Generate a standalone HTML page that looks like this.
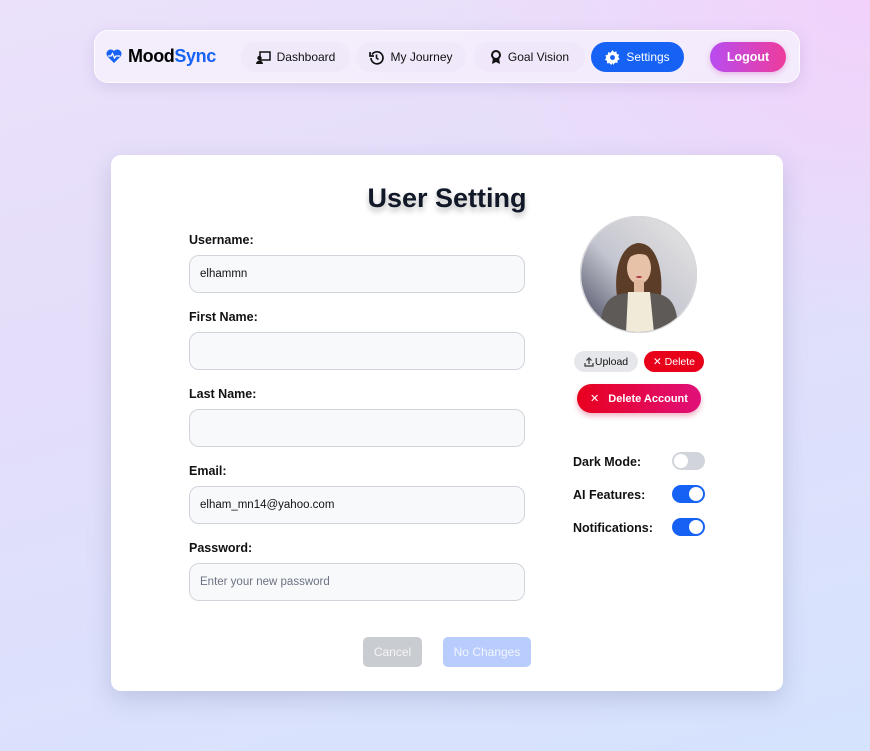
<!DOCTYPE html>
<html><head><meta charset="utf-8"><style>
*{box-sizing:border-box;margin:0;padding:0}
html,body{width:870px;height:751px;overflow:hidden}
body{font-family:"Liberation Sans",sans-serif;background:linear-gradient(165deg,#ebe1fb 0%,#e4defa 40%,#d5e3fd 100%);position:relative}
.bgpink{position:absolute;right:0;top:0;width:420px;height:320px;background:radial-gradient(ellipse at top right,rgba(243,208,250,.9),rgba(243,210,250,0) 70%)}
.abs{position:absolute}
.nav{left:94px;top:30px;width:706px;height:53px;border-radius:14px;background:rgba(245,238,252,.85);border:1px solid rgba(255,255,255,.8);box-shadow:0 4px 14px rgba(120,100,170,.18)}
.pill{position:absolute;top:42px;height:30px;border-radius:15px;background:rgba(240,232,250,.9);font-size:12px;color:#111;display:flex;align-items:center;justify-content:center;gap:6px}
.card{left:111px;top:155px;width:672px;height:536px;background:#fff;border-radius:10px;box-shadow:0 8px 24px rgba(100,110,150,.25)}
.lbl{position:absolute;left:189px;font-size:12.5px;font-weight:bold;color:#111}
.inp{position:absolute;left:189px;width:336px;height:38px;border:1px solid #d1d5db;border-radius:10px;background:#f8f9fb;font-size:11.5px;color:#111;padding-left:10px;display:flex;align-items:center}
.tl{position:absolute;left:573px;font-size:12.5px;font-weight:bold;color:#111}
.tg{position:absolute;left:672px;width:33px;height:18px;border-radius:9px}
.tg i{position:absolute;top:2px;width:14px;height:14px;border-radius:50%;background:#fff}
</style></head><body>
<div class="bgpink"></div>
<div class="abs nav"></div>
<svg class="abs" style="left:106px;top:49px" width="16" height="14" viewBox="0 0 16 14"><path d="M8 14L1.5 7.5A4 4 0 0 1 8 2a4 4 0 0 1 6.5 5.5z" fill="#1662f5"/><path d="M2 7h3l1.5-2.5 2 4.5 1.5-2h4" stroke="#fff" stroke-width="1.3" fill="none"/></svg>
<div class="abs" style="left:128px;top:46px;font-size:18px;font-weight:bold;color:#000;letter-spacing:-.4px">Mood<span style="color:#1662f5">Sync</span></div>
<div class="pill" style="left:241px;width:109px"><svg width="15" height="13" viewBox="0 0 15 13"><rect x="4" y="1" width="10" height="8" fill="none" stroke="#111" stroke-width="1.5"/><circle cx="3.5" cy="7" r="2.2" fill="#111"/><path d="M0 13a3.5 3.5 0 0 1 7 0z" fill="#111"/></svg>Dashboard</div>
<div class="pill" style="left:356px;width:110px"><svg width="15" height="15" viewBox="0 0 15 15"><path d="M3 4.5A6 6 0 1 1 2 8" fill="none" stroke="#111" stroke-width="1.7"/><path d="M1 2v4h4" fill="none" stroke="#111" stroke-width="1.7"/><path d="M7.5 4.5v3.5l2 1.5" fill="none" stroke="#111" stroke-width="1.6"/></svg>My Journey</div>
<div class="pill" style="left:474px;width:111px"><svg width="12" height="15" viewBox="0 0 12 15"><circle cx="6" cy="5" r="4" fill="none" stroke="#111" stroke-width="2"/><path d="M3 8l-1 6 4-2 4 2-1-6" fill="#111"/></svg>Goal Vision</div>
<div class="pill" style="left:591px;width:93px;background:#1662f5;color:#fff"><svg width="15" height="15" viewBox="0 0 16 16"><path d="M8 0l1.6 2.2 2.6-.8.3 2.7 2.6.9-1 2.5 1.6 2.2-2.4 1.3.1 2.7-2.7-.3L8.9 16 8 14l-1.4 2-1.8-2-2.7.3.1-2.7L-.2 10.5l1.6-2.2-1-2.5 2.6-.9.3-2.7 2.6.8z" fill="#fff"/><circle cx="8" cy="8" r="2.6" fill="#1662f5"/></svg>Settings</div>
<div class="pill" style="left:710px;width:76px;background:linear-gradient(90deg,#b84cf0,#ee3c9c);color:#fff;font-weight:bold;font-size:12.5px;box-shadow:0 2px 6px rgba(200,60,180,.3)">Logout</div>

<div class="abs card"></div>
<div class="abs" style="left:111px;width:672px;top:183px;text-align:center;font-size:27px;font-weight:900;color:#111827;text-shadow:0 4px 6px rgba(0,0,0,.25)">User Setting</div>

<div class="lbl" style="top:233px">Username:</div>
<div class="inp" style="top:255px">elhammn</div>
<div class="lbl" style="top:310px">First Name:</div>
<div class="inp" style="top:332px"></div>
<div class="lbl" style="top:387px">Last Name:</div>
<div class="inp" style="top:409px"></div>
<div class="lbl" style="top:464px">Email:</div>
<div class="inp" style="top:486px">elham_mn14@yahoo.com</div>
<div class="lbl" style="top:541px">Password:</div>
<div class="inp" style="top:563px;color:#6b7280">Enter your new password</div>

<svg class="abs" style="left:580px;top:216px" width="117" height="117" viewBox="0 0 117 117">
<defs><linearGradient id="g" x1="1" y1="0" x2="0" y2="1"><stop offset="0" stop-color="#e9e6e4"/><stop offset=".55" stop-color="#c4c6d0"/><stop offset="1" stop-color="#3f4258"/></linearGradient><clipPath id="c"><circle cx="58.5" cy="58.5" r="57.5"/></clipPath></defs>
<circle cx="58.5" cy="58.5" r="58" fill="url(#g)" stroke="#d8d8dc" stroke-width="1.5"/>
<g clip-path="url(#c)">
<path d="M37 80C34 60 38 30 58 27c20 0 25 30 23 52z" fill="#5c3d27"/>
<ellipse cx="59" cy="52" rx="12" ry="16" fill="#e8c2a8"/>
<path d="M46 45c2-14 22-16 26-2-6-6-18-8-26 2z" fill="#5c3d27"/>
<rect x="54" y="64" width="10" height="12" fill="#e0b89e"/>
<path d="M20 117c0-30 10-40 30-40h18c22 0 30 10 30 40z" fill="#5d5a58"/>
<path d="M48 76h22l4 41H46z" fill="#f1ead8"/>
<ellipse cx="59" cy="61" rx="3" ry="1" fill="#b03a48"/>
</g></svg>

<div class="abs" style="left:574px;top:351px;width:64px;height:21px;border-radius:11px;background:#e5e7eb;font-size:10.5px;color:#111;display:flex;align-items:center;justify-content:center;gap:1px"><svg width="10" height="10" viewBox="0 0 10 10"><path d="M5 7V1M2.5 3.5L5 1l2.5 2.5M1 6v3h8V6" fill="none" stroke="#333" stroke-width="1.2"/></svg>Upload</div>
<div class="abs" style="left:644px;top:351px;width:60px;height:21px;border-radius:11px;background:#e8001a;font-size:10.5px;color:#fff;display:flex;align-items:center;justify-content:center">✕ Delete</div>
<div class="abs" style="left:577px;top:384px;width:124px;height:29px;border-radius:15px;background:linear-gradient(90deg,#e8001e,#e0107a);font-size:11px;font-weight:bold;color:#fff;display:flex;align-items:center;justify-content:center;gap:9px;box-shadow:0 3px 6px rgba(200,0,60,.3)"><span style="font-weight:normal">✕</span>Delete Account</div>

<div class="tl" style="top:455px">Dark Mode:</div>
<div class="tg" style="top:452px;background:#d1d5db"><i style="left:2px"></i></div>
<div class="tl" style="top:488px">AI Features:</div>
<div class="tg" style="top:485px;background:#1662f5"><i style="left:17px"></i></div>
<div class="tl" style="top:521px">Notifications:</div>
<div class="tg" style="top:518px;background:#1662f5"><i style="left:17px"></i></div>

<div class="abs" style="left:363px;top:637px;width:59px;height:30px;border-radius:5px;background:#c9ccd1;color:#f3f4f6;font-size:12px;display:flex;align-items:center;justify-content:center">Cancel</div>
<div class="abs" style="left:443px;top:637px;width:88px;height:30px;border-radius:5px;background:#b8ccfd;color:#f3f6ff;font-size:12px;display:flex;align-items:center;justify-content:center">No Changes</div>
</body></html>
